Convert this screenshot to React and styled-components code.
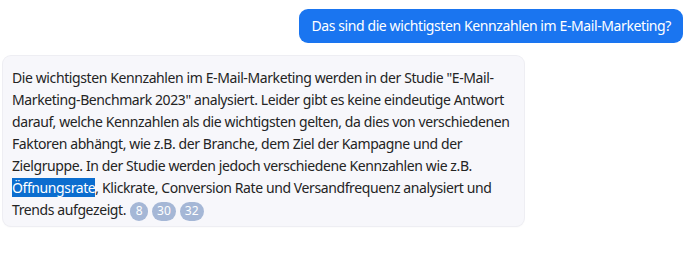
import React from "react";
import styled, { createGlobalStyle } from "styled-components";

const Global = createGlobalStyle`
  html, body { margin: 0; padding: 0; background: #ffffff; }
  body { font-family: "Noto Sans", "Open Sans", sans-serif; }
`;

const Chat = styled.div`
  width: 689px;
  height: 255px;
  display: flex;
  flex-direction: column;
  padding: 9px 6px 0 3px;
  box-sizing: border-box;
  gap: 13px;
`;

const UserBubble = styled.div`
  align-self: flex-end;
  background: #1a75f0;
  color: #ffffff;
  border-radius: 9px;
  padding: 6px 12px 7px 12px;
  font-size: 14px;
  letter-spacing: -0.4px;
  line-height: 21px;
`;

const BotBubble = styled.div`
  align-self: flex-start;
  width: 521px;
  box-sizing: border-box;
  background: #f7f7fb;
  color: #242424;
  border-radius: 8px;
  box-shadow: 0 0 0 1px #eeeef3, 0 1px 2px rgba(0, 0, 0, 0.06);
  padding: 11px 12px 5px 9px;
  font-size: 14px;
  letter-spacing: -0.4px;
  line-height: 22px;
`;

const Selected = styled.span`
  background: #0b6dcf;
  color: #ffffff;
`;

const Cite = styled.span`
  display: inline-flex;
  align-items: center;
  justify-content: center;
  min-width: 18px;
  height: 19px;
  padding: 0 5px;
  box-sizing: border-box;
  margin-left: 4px;
  border-radius: 10px;
  background: #a5b7d6;
  color: #ffffff;
  font-size: 12px;
  letter-spacing: 0;
  line-height: 1;
  vertical-align: middle;
`;

export default function App() {
  return (
    <>
      <Global />
      <Chat>
        <UserBubble>Das sind die wichtigsten Kennzahlen im E-Mail-Marketing?</UserBubble>
        <BotBubble>
          Die wichtigsten Kennzahlen im E-Mail-Marketing werden in der Studie "E-Mail-Marketing-Benchmark 2023" analysiert. Leider gibt es keine eindeutige Antwort darauf, welche Kennzahlen als die wichtigsten gelten, da dies von verschiedenen Faktoren abhängt, wie z.B. der Branche, dem Ziel der Kampagne und der Zielgruppe. In der Studie werden jedoch verschiedene Kennzahlen wie z.B. <Selected>Öffnungsrate</Selected>, Klickrate, Conversion Rate und Versandfrequenz analysiert und Trends aufgezeigt.<Cite>8</Cite><Cite>30</Cite><Cite>32</Cite>
        </BotBubble>
      </Chat>
    </>
  );
}
